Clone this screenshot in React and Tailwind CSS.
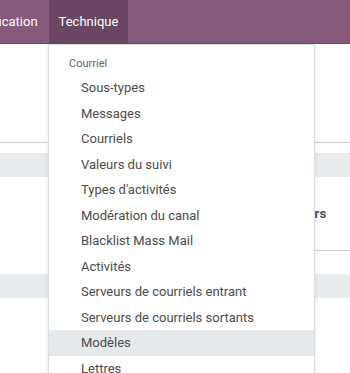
export default function App() {
  const items = [
    "Sous-types",
    "Messages",
    "Courriels",
    "Valeurs du suivi",
    "Types d'activités",
    "Modération du canal",
    "Blacklist Mass Mail",
    "Activités",
    "Serveurs de courriels entrant",
    "Serveurs de courriels sortants",
    "Modèles",
    "Lettres",
  ];

  return (
    <div
      className="relative h-[373px] w-[350px] overflow-hidden bg-white"
      style={{ fontFamily: "Roboto, 'Liberation Sans', sans-serif" }}
    >
      {/* Top navbar */}
      <nav className="flex h-[44px] overflow-hidden border-b border-[#714c69] bg-[#875A7B] text-[13px] text-white">
        <div className="-ml-[47px] flex">
          <span className="flex items-center px-[11px]">Gamification</span>
          <span className="flex items-center bg-[#6b4663] px-[10px]">Technique</span>
        </div>
      </nav>

      {/* Page content behind the menu */}
      <div className="h-[98px]" />
      <div className="h-px bg-[#cfcfcf]" />
      <div className="h-[10px]" />
      <div className="h-[24px] bg-[#e9ecef]" />
      <div className="flex h-[73px] items-center">
        <span className="ml-[259px] text-[13px] font-bold text-[#4c4c4c]">Utilisateurs</span>
      </div>
      <div className="ml-[175px] h-px bg-[#cfcfcf]" />
      <div className="h-[23px]" />
      <div className="h-[24px] bg-[#e9ecef]" />

      {/* Dropdown menu */}
      <div className="absolute left-[48px] top-[44px] w-[267px] border border-[#d8dee6] bg-white pt-[8px] pb-[8px] shadow-[0_0_4px_rgba(0,0,0,0.12)]">
        <div className="flex h-[22px] items-center pl-[20px] text-[11px] text-[#666666]">Courriel</div>
        {items.map((item) => (
          <div
            key={item}
            className={
              "flex h-[25.5px] items-center pl-[32px] text-[13px] text-[#4c4c4c] " +
              (item === "Modèles" ? "bg-[#e6e9ec]" : "")
            }
          >
            {item}
          </div>
        ))}
      </div>
    </div>
  );
}
